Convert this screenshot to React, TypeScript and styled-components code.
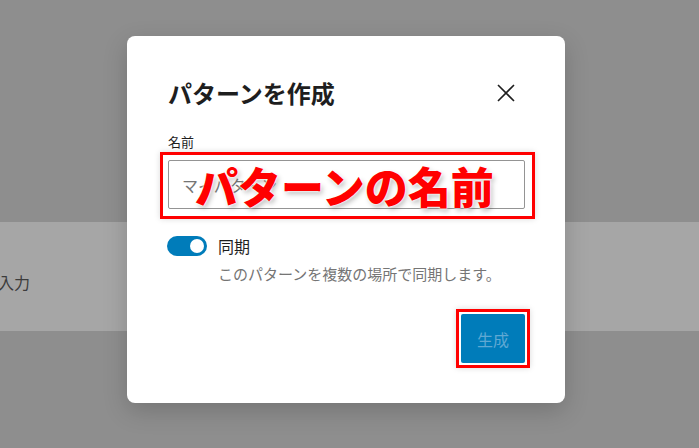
import styled, { createGlobalStyle } from 'styled-components';

const GlobalStyle = createGlobalStyle`
  html, body {
    margin: 0;
    padding: 0;
  }
  body {
    font-family: "Noto Sans CJK JP", "Noto Sans", sans-serif;
  }
`;

const Stage = styled.div`
  position: relative;
  width: 699px;
  height: 448px;
  overflow: hidden;
  background-color: #8e8e8e;
  display: flex;
  flex-direction: column;
`;

const TopSpace = styled.div`
  height: 222px;
`;

const Band = styled.div`
  height: 109px;
  background-color: #a6a6a6;
  display: flex;
  align-items: center;
  padding-top: 10px;
  box-sizing: border-box;
`;

const BandText = styled.span`
  margin-left: -2px;
  font-size: 16px;
  color: #3c3c3c;
`;

const Modal = styled.div`
  position: absolute;
  left: 127px;
  top: 36px;
  width: 438px;
  height: 367px;
  box-sizing: border-box;
  background-color: #ffffff;
  border-radius: 8px;
  box-shadow: 0 8px 24px rgba(0, 0, 0, 0.18);
  padding: 0 40px 0 41px;
  display: flex;
  flex-direction: column;
`;

const Header = styled.div`
  display: flex;
  align-items: center;
  justify-content: space-between;
  padding-top: 40px;
  height: 34px;
`;

const Title = styled.h1`
  margin: 0;
  font-size: 24px;
  line-height: 34px;
  font-weight: 700;
  color: #1e1e1e;
`;

const CloseButton = styled.button`
  width: 24px;
  height: 24px;
  margin-right: 7px;
  padding: 0;
  border: none;
  background: none;
  display: flex;
  align-items: center;
  justify-content: center;
  color: #1e1e1e;
`;

const FieldLabel = styled.label`
  margin-top: 23px;
  font-size: 13px;
  line-height: 18px;
  color: #1e1e1e;
`;

const Highlight = styled.div<{ $pad: string }>`
  position: relative;
  border: 3px solid #ff0000;
  padding: ${p => p.$pad};
  box-shadow: 0 0 6px rgba(0, 0, 0, 0.15);
  display: flex;
`;

const NameBox = styled(Highlight)`
  margin: 1px 0 0 -8px;
  width: 375px;
  box-sizing: border-box;
`;

const TextInput = styled.div`
  width: 357px;
  height: 49px;
  box-sizing: border-box;
  border: 1px solid #949494;
  border-radius: 2px;
  display: flex;
  align-items: center;
  padding-left: 13px;
  font-size: 16px;
  color: #757575;
`;

const Annotation = styled.div`
  position: absolute;
  left: 32px;
  top: 2px;
  font-size: 43px;
  line-height: 56px;
  font-weight: 900;
  color: #ff0000;
  text-shadow: 0 0 3px #ffffff, 0 0 2px #ffffff, 0 0 1px #ffffff, 2px 3px 5px rgba(0, 0, 0, 0.25);
  white-space: nowrap;
`;

const ToggleRow = styled.div`
  margin: 17px 0 0 -1px;
  display: flex;
  align-items: center;
  gap: 11px;
`;

const Switch = styled.div<{ $on: boolean }>`
  width: 40px;
  height: 20px;
  border-radius: 10px;
  box-sizing: border-box;
  background-color: ${p => (p.$on ? '#007cba' : '#ffffff')};
  display: flex;
  align-items: center;
  justify-content: ${p => (p.$on ? 'flex-end' : 'flex-start')};
  padding: 0 3px;
`;

const Thumb = styled.span`
  width: 14px;
  height: 14px;
  border-radius: 50%;
  background-color: #ffffff;
`;

const ToggleLabel = styled.span`
  font-size: 16px;
  line-height: 20px;
  color: #1e1e1e;
`;

const HelpText = styled.p`
  margin: 8px 0 0 50px;
  font-size: 15px;
  line-height: 20px;
  color: #757575;
`;

const Footer = styled.div`
  margin: 25px -5px 0 0;
  display: flex;
  justify-content: flex-end;
`;

const ButtonBox = styled(Highlight)``;

const PrimaryButton = styled.button`
  width: 64px;
  height: 49px;
  border: none;
  border-radius: 2px;
  background-color: #007cba;
  color: #5fa8d3;
  font-family: inherit;
  font-size: 16px;
  padding: 0;
`;

export default function App() {
  return (
    <>
      <GlobalStyle />
      <Stage>
        <TopSpace />
        <Band>
          <BandText>入力</BandText>
        </Band>
        <Modal>
          <Header>
            <Title>パターンを作成</Title>
            <CloseButton aria-label="閉じる">
              <svg width="24" height="24" viewBox="0 0 24 24">
                <path d="M4 4 L20 20 M20 4 L4 20" stroke="currentColor" strokeWidth="1.6" fill="none" />
              </svg>
            </CloseButton>
          </Header>
          <FieldLabel>名前</FieldLabel>
          <NameBox $pad="5px 7px 7px 5px">
            <TextInput>マイパターン</TextInput>
            <Annotation>パターンの名前</Annotation>
          </NameBox>
          <ToggleRow>
            <Switch $on>
              <Thumb />
            </Switch>
            <ToggleLabel>同期</ToggleLabel>
          </ToggleRow>
          <HelpText>このパターンを複数の場所で同期します。</HelpText>
          <Footer>
            <ButtonBox $pad="2px">
              <PrimaryButton>生成</PrimaryButton>
            </ButtonBox>
          </Footer>
        </Modal>
      </Stage>
    </>
  );
}
